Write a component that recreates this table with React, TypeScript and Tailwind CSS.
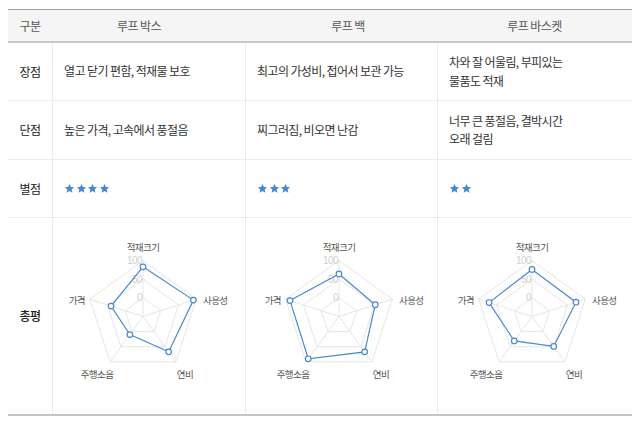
import React from 'react'

type Review = {
  name: string
  pros: React.ReactNode
  cons: React.ReactNode
  stars: number
  scores: number[]
  dx: number
}

const AXES = ['적재크기', '사용성', '연비', '주행소음', '가격']

const reviews: Review[] = [
  {
    name: '루프 박스',
    pros: '열고 닫기 편함, 적재물 보호',
    cons: '높은 가격, 고속에서 풍절음',
    stars: 4,
    scores: [83, 92, 67, 10, 40],
    dx: -6,
  },
  {
    name: '루프 백',
    pros: '최고의 가성비, 접어서 보관 가능',
    cons: '찌그러짐, 비오면 난감',
    stars: 3,
    scores: [64, 52, 67, 90, 88],
    dx: -3,
  },
  {
    name: '루프 바스켓',
    pros: (
      <>
        차와 잘 어울림, 부피있는
        <br />
        물품도 적재
      </>
    ),
    cons: (
      <>
        너무 큰 풍절음, 결박시간
        <br />
        오래 걸림
      </>
    ),
    stars: 2,
    scores: [76, 74, 49, 31, 71],
    dx: -3,
  },
]

const Star = () => (
  <svg width="11" height="11" viewBox="0 0 24 24">
    <path
      d="M12 2.2l2.95 6.5 7.05.75-5.3 4.75 1.5 6.95L12 17.6l-6.2 3.55 1.5-6.95L2 9.45l7.05-.75z"
      fill="#4388d6"
    />
  </svg>
)

function Radar({ scores, dx }: { scores: number[]; dx: number }) {
  const cx = 90 + dx
  const cy = 80.5
  const R = 56
  // scale runs from -50 (centre) to 100 (outer ring)
  const rad = (v: number) => (R * (v + 50)) / 150
  const pt = (i: number, r: number) => {
    const a = ((-90 + i * 72) * Math.PI) / 180
    return [cx + r * Math.cos(a), cy + r * Math.sin(a)]
  }
  const ring = (r: number) =>
    AXES.map((_, i) => pt(i, r).map((n) => n.toFixed(2)).join(',')).join(' ')
  const data = scores.map((s, i) => pt(i, rad(s)))

  const labels = [
    { t: AXES[0], x: cx, y: cy - 70, anchor: 'middle' },
    { t: AXES[1], x: cx + 60, y: cy - 17, anchor: 'start' },
    { t: AXES[2], x: cx + 42, y: cy + 57, anchor: 'middle' },
    { t: AXES[3], x: cx - 46, y: cy + 57, anchor: 'middle' },
    { t: AXES[4], x: cx - 58, y: cy - 17, anchor: 'end' },
  ]

  return (
    <svg width="180" height="161" viewBox="0 0 180 161">
      {[0, 50, 100].map((v) => (
        <polygon key={v} points={ring(rad(v))} fill="none" stroke="#e6e6e6" strokeWidth="1" />
      ))}
      {AXES.map((_, i) => {
        const [x, y] = pt(i, R)
        return <line key={i} x1={cx} y1={cy} x2={x} y2={y} stroke="#e6e6e6" strokeWidth="1" />
      })}
      {[0, 50, 100].map((v) => (
        <text
          key={v}
          x={cx - 1}
          y={cy - rad(v)}
          textAnchor="end"
          dominantBaseline="central"
          fontSize="10"
          fill="#cfcfcf"
          fontFamily="'Liberation Sans', sans-serif"
        >
          {v}
        </text>
      ))}
      <polygon
        points={data.map((p) => p.join(',')).join(' ')}
        fill="none"
        stroke="#4a88d2"
        strokeWidth="1.2"
      />
      {data.map(([x, y], i) => (
        <circle key={i} cx={x} cy={y} r="2.8" fill="#fff" stroke="#4a88d2" strokeWidth="1.2" />
      ))}
      {labels.map((l) => (
        <text
          key={l.t}
          x={l.x}
          y={l.y}
          textAnchor={l.anchor as 'start' | 'middle' | 'end'}
          dominantBaseline="central"
          fontSize="9.5"
          fill="#555"
          fontFamily="'Noto Sans CJK KR', sans-serif"
        >
          {l.t}
        </text>
      ))}
    </svg>
  )
}

const rowGrid = 'grid grid-cols-[44px_193px_192px_195px] border-b border-[#ebebeb]'
const labelCell = 'flex items-center justify-center text-[#222]'
const bodyCell = 'flex items-center border-l border-[#ebebeb] pl-[11px] leading-[18.5px]'

export default function App() {
  return (
    <div className="w-[640px] h-[427px] bg-white pt-[9px] px-[8px] font-['Noto_Sans_CJK_KR',sans-serif] text-[12px] tracking-[-0.6px] text-[#333]">
      <div className="w-[624px]">
        <div className="grid grid-cols-[44px_193px_192px_195px] h-[34px] border-t border-b-2 border-t-[#a3a3a3] border-b-[#c9c9c9] bg-[#f5f5f5] text-[#555]">
          <div className="flex items-center justify-center">구분</div>
          <div className="flex items-center justify-center pr-[19px]">{reviews[0].name}</div>
          <div className="flex items-center justify-center pl-[14px]">{reviews[1].name}</div>
          <div className="flex items-center justify-center">{reviews[2].name}</div>
        </div>

        <div className={`${rowGrid} h-[58px]`}>
          <div className={labelCell}>장점</div>
          {reviews.map((r) => (
            <div key={r.name} className={bodyCell}>
              <p>{r.pros}</p>
            </div>
          ))}
        </div>

        <div className={`${rowGrid} h-[59px]`}>
          <div className={labelCell}>단점</div>
          {reviews.map((r) => (
            <div key={r.name} className={bodyCell}>
              <p>{r.cons}</p>
            </div>
          ))}
        </div>

        <div className={`${rowGrid} h-[58px]`}>
          <div className={labelCell}>별점</div>
          {reviews.map((r) => (
            <div key={r.name} className={bodyCell}>
              <div className="flex gap-[0.5px]">
                {Array.from({ length: r.stars }).map((_, i) => (
                  <Star key={i} />
                ))}
              </div>
            </div>
          ))}
        </div>

        <div className="grid grid-cols-[44px_193px_192px_195px] h-[198px] border-b-2 border-[#c4c4c4]">
          <div className={`${labelCell} font-medium`}>총평</div>
          {reviews.map((r) => (
            <div key={r.name} className="flex items-center justify-center border-l border-[#ebebeb]">
              <Radar scores={r.scores} dx={r.dx} />
            </div>
          ))}
        </div>
      </div>
    </div>
  )
}
